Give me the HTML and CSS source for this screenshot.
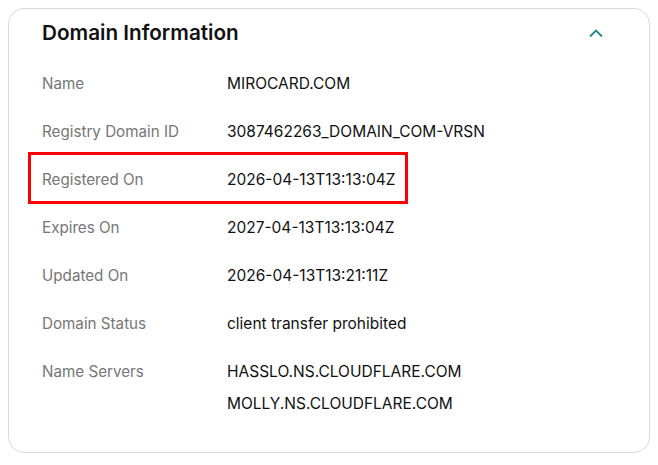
FILE: index.html
```html
<!DOCTYPE html>
<html lang="en">
<head>
<meta charset="utf-8">
<title>Domain Information</title>
<link rel="stylesheet" href="styles.css">
</head>
<body>
<section class="card">
  <header class="card-header">
    <h2 class="card-title">Domain Information</h2>
    <button class="toggle" aria-label="Collapse">
      <svg width="16" height="10" viewBox="0 0 16 10"><path d="M2 8.5 L8 2.5 L14 8.5" fill="none" stroke="#1e8a8d" stroke-width="1.8"/></svg>
    </button>
  </header>
  <dl class="info">
    <div class="row"><dt>Name</dt><dd>MIROCARD.COM</dd></div>
    <div class="row"><dt>Registry Domain ID</dt><dd>3087462263_DOMAIN_COM-VRSN</dd></div>
    <div class="row highlight"><dt>Registered On</dt><dd>2026-04-13T13:13:04Z</dd></div>
    <div class="row"><dt>Expires On</dt><dd>2027-04-13T13:13:04Z</dd></div>
    <div class="row"><dt>Updated On</dt><dd>2026-04-13T13:21:11Z</dd></div>
    <div class="row"><dt>Domain Status</dt><dd>client transfer prohibited</dd></div>
    <div class="row"><dt>Name Servers</dt><dd class="list"><span>HASSLO.NS.CLOUDFLARE.COM</span><span>MOLLY.NS.CLOUDFLARE.COM</span></dd></div>
  </dl>
</section>
</body>
</html>
```

FILE: styles.css
```css
html, body {
  margin: 0;
  padding: 0;
  background: #ffffff;
}
body {
  font-family: "Inter", "Liberation Sans", sans-serif;
  color: #111111;
}
.card {
  margin: 8px 0 0 8px;
  width: 642px;
  height: 445px;
  box-sizing: border-box;
  border: 1px solid #d6dbe0;
  border-radius: 16px;
  padding: 0 33px 0 33px;
}
.card-header {
  display: flex;
  align-items: center;
  justify-content: space-between;
  height: 48px;
}
.card-title {
  margin: 0;
  font-size: 20.7px;
  font-weight: 600;
  line-height: 28px;
  color: #111111;
}
.toggle {
  border: 0;
  background: none;
  padding: 0;
  margin-right: 12px;
  display: flex;
}
.info {
  margin: 3px 0 0;
  padding: 0;
}
.row {
  display: grid;
  grid-template-columns: 185px 1fr;
  padding: 14px 0;
  line-height: 20px;
  font-size: 15.2px;
  position: relative;
}
.row dt {
  color: #767676;
}
.row dd {
  margin: 0;
  color: #111111;
  font-size: 15.5px;
}
.list {
  display: flex;
  flex-direction: column;
  gap: 12px;
}
.highlight::after {
  content: "";
  position: absolute;
  left: -14px;
  top: -4px;
  width: 380px;
  height: 52px;
  box-sizing: border-box;
  border: 3px solid #ff0000;
}
```
